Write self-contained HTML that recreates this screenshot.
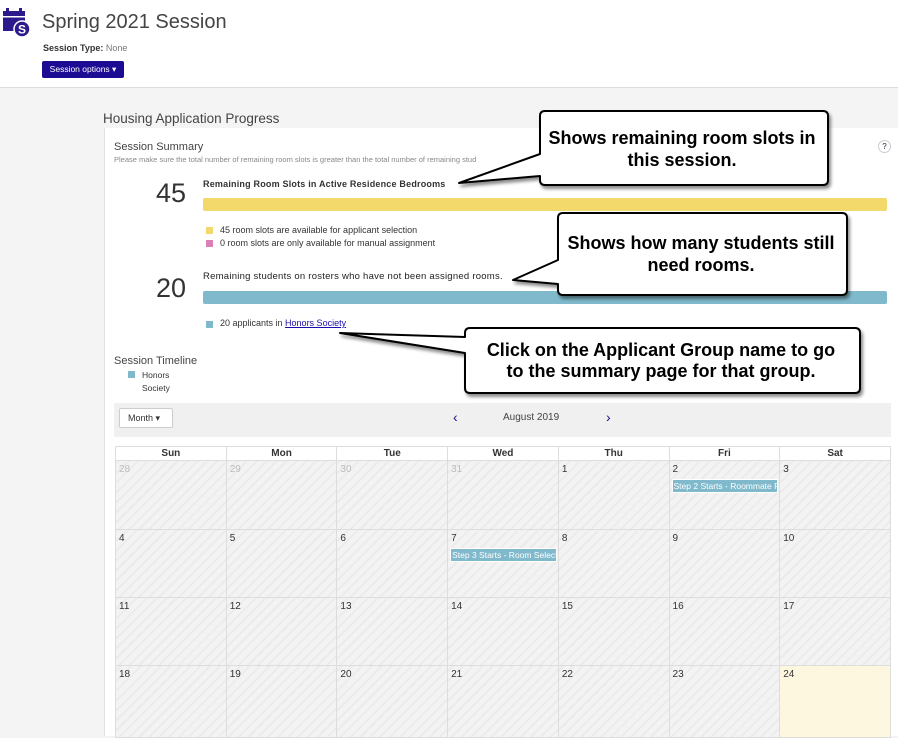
<!DOCTYPE html>
<html><head><meta charset="utf-8"><style>
*{margin:0;padding:0;box-sizing:border-box}
body{width:898px;height:736px;overflow:hidden;background:#f4f4f4;font-family:"Liberation Sans",sans-serif;position:relative;color:#333}
.hdr{position:absolute;left:0;top:0;width:898px;height:88px;background:#fff;border-bottom:1px solid #ddd}
.abs{position:absolute;white-space:nowrap}
.panel{position:absolute;left:104px;top:128px;width:794px;height:608px;background:#fff;border-left:1px solid #e2e2e2}
.cal{position:absolute;left:115px;top:446px;width:776px;border-collapse:collapse;table-layout:fixed}
.cal th{height:14px;font-size:10px;font-weight:bold;border:1px solid #ddd;background:#fff;color:#333}
.cal td{border:1px solid #ddd;vertical-align:top;font-size:10px;padding:3px 3px;color:#333;background:repeating-linear-gradient(-45deg,#f3f3f3 0 5px,#ebebeb 5px 7px)}
.cal td.o{color:#bbb}
.ev{background:#7fb9cb;color:#fff;font-size:8.5px;white-space:nowrap;overflow:hidden;margin:4px -2px 0 -1px;padding:1px 1px;border:1px solid #fff}
</style></head><body>
<div class="hdr">
<svg class="abs" style="left:2px;top:7px" width="30" height="30" viewBox="0 0 30 30"><rect x="1" y="4" width="22" height="20" fill="#2c1a8c"/><rect x="4" y="1" width="3" height="5" fill="#2c1a8c"/><rect x="17" y="1" width="3" height="5" fill="#2c1a8c"/><rect x="1" y="9" width="22" height="1.5" fill="#fff"/><circle cx="20" cy="22" r="8" fill="#2c1a8c" stroke="#fff" stroke-width="1.5"/><text x="20" y="26.5" font-size="12" font-weight="bold" fill="#fff" text-anchor="middle" font-family="Liberation Sans">S</text></svg>
<div class="abs" style="left:42px;top:11px;font-size:20px;color:#444">Spring 2021 Session</div>
<div class="abs" style="left:43px;top:43px;font-size:9px;color:#333"><b>Session Type:</b> <span style="color:#777">None</span></div>
<div class="abs" style="left:42px;top:61px;width:82px;height:17px;background:#1c0b93;border-radius:2px;color:#fff;font-size:8.5px;line-height:17px;text-align:center">Session options &#9662;</div>
</div>
<div class="abs" style="left:103px;top:111px;font-size:13.5px;color:#444">Housing Application Progress</div>
<div class="panel"></div>
<div class="abs" style="left:114px;top:141px;font-size:11px;color:#444">Session Summary</div>
<div class="abs" style="left:114px;top:155px;font-size:7.5px;color:#888">Please make sure the total number of remaining room slots is greater than the total number of remaining stud</div>
<div class="abs" style="left:878px;top:140px;width:13px;height:13px;border:1px solid #ccc;border-radius:50%;font-size:8px;text-align:center;line-height:11px;color:#224">?</div>
<div class="abs" style="left:156px;top:178px;font-size:27px;color:#333;font-weight:300">45</div>
<div class="abs" style="left:203px;top:179px;font-size:9px;font-weight:bold;color:#333;letter-spacing:0.2px">Remaining Room Slots in Active Residence Bedrooms</div>
<div class="abs" style="left:203px;top:198px;width:684px;height:13px;background:#f3d86c;border-radius:2px"></div>
<div class="abs" style="left:206px;top:227px;width:7px;height:7px;background:#f3d86c"></div>
<div class="abs" style="left:220px;top:225px;font-size:9px">45 room slots are available for applicant selection</div>
<div class="abs" style="left:206px;top:240px;width:7px;height:7px;background:#dc7fb6"></div>
<div class="abs" style="left:220px;top:238px;font-size:9px">0 room slots are only available for manual assignment</div>
<div class="abs" style="left:156px;top:273px;font-size:27px;color:#333;font-weight:300">20</div>
<div class="abs" style="left:203px;top:271px;font-size:9.5px;color:#222;letter-spacing:0.25px">Remaining students on rosters who have not been assigned rooms.</div>
<div class="abs" style="left:203px;top:291px;width:684px;height:13px;background:#7fb9cb;border-radius:2px"></div>
<div class="abs" style="left:206px;top:321px;width:7px;height:7px;background:#7fb9cb"></div>
<div class="abs" style="left:220px;top:318px;font-size:9px">20 applicants in <span style="color:#1a0dab;text-decoration:underline">Honors Society</span></div>
<div class="abs" style="left:114px;top:355px;font-size:11px;color:#444">Session Timeline</div>
<div class="abs" style="left:128px;top:371px;width:7px;height:7px;background:#7fb9cb"></div>
<div class="abs" style="left:142px;top:369px;font-size:8.5px;line-height:13px;color:#333">Honors<br>Society</div>
<div class="abs" style="left:114px;top:403px;width:777px;height:34px;background:#f0f0f0"></div>
<div class="abs" style="left:119px;top:408px;width:54px;height:20px;background:#fff;border:1px solid #ccc;border-radius:2px;font-size:9px;line-height:18px;padding-left:8px">Month &#9662;</div>
<div class="abs" style="left:453px;top:409px;font-size:14px;color:#1c0b93">&#8249;</div>
<div class="abs" style="left:503px;top:412px;font-size:10px;color:#444">August 2019</div>
<div class="abs" style="left:606px;top:409px;font-size:14px;color:#1c0b93">&#8250;</div>
<table class="cal">
<tr><th>Sun</th><th>Mon</th><th>Tue</th><th>Wed</th><th>Thu</th><th>Fri</th><th>Sat</th></tr>
<tr style="height:69px"><td class="o">28</td><td class="o">29</td><td class="o">30</td><td class="o">31</td><td>1</td><td>2<div class="ev">Step 2 Starts - Roommate Re</div></td><td>3</td></tr>
<tr style="height:68px"><td>4</td><td>5</td><td>6</td><td>7<div class="ev">Step 3 Starts - Room Selection</div></td><td>8</td><td>9</td><td>10</td></tr>
<tr style="height:68px"><td>11</td><td>12</td><td>13</td><td>14</td><td>15</td><td>16</td><td>17</td></tr>
<tr style="height:72px"><td>18</td><td>19</td><td>20</td><td>21</td><td>22</td><td>23</td><td style="background:#fdf7e0">24</td></tr>
</table>
<svg class="abs" style="left:0;top:0" width="898" height="736">
<defs><filter id="s" x="-10%" y="-10%" width="130%" height="140%"><feDropShadow dx="2" dy="3" stdDeviation="1.5" flood-color="#000" flood-opacity="0.45"/></filter></defs>
<g filter="url(#s)" fill="#fff" stroke="#000" stroke-width="2" stroke-linejoin="round">
<path d="M545,111 H823 Q828,111 828,116 V180 Q828,185 823,185 H545 Q540,185 540,180 V176 L459,183 L540,154 V116 Q540,111 545,111 Z"/>
<path d="M563,213 H842 Q847,213 847,218 V290 Q847,295 842,295 H563 Q558,295 558,290 V284 L513,280 L558,260 V218 Q558,213 563,213 Z"/>
<path d="M470,328 H855 Q860,328 860,333 V388 Q860,393 855,393 H470 Q465,393 465,388 V353 L340,333 L465,337 V333 Q465,328 470,328 Z"/>
</g>
<g font-family="Liberation Sans" font-weight="bold" font-size="18" fill="#000" text-anchor="middle">
<text x="682" y="144">Shows remaining room slots in</text><text x="682" y="166">this session.</text>
<text x="701" y="249">Shows how many students still</text><text x="701" y="271">need rooms.</text>
<text x="661" y="356">Click on the Applicant Group name to go</text><text x="661" y="377">to the summary page for that group.</text>
</g>
</svg>
</body></html>
